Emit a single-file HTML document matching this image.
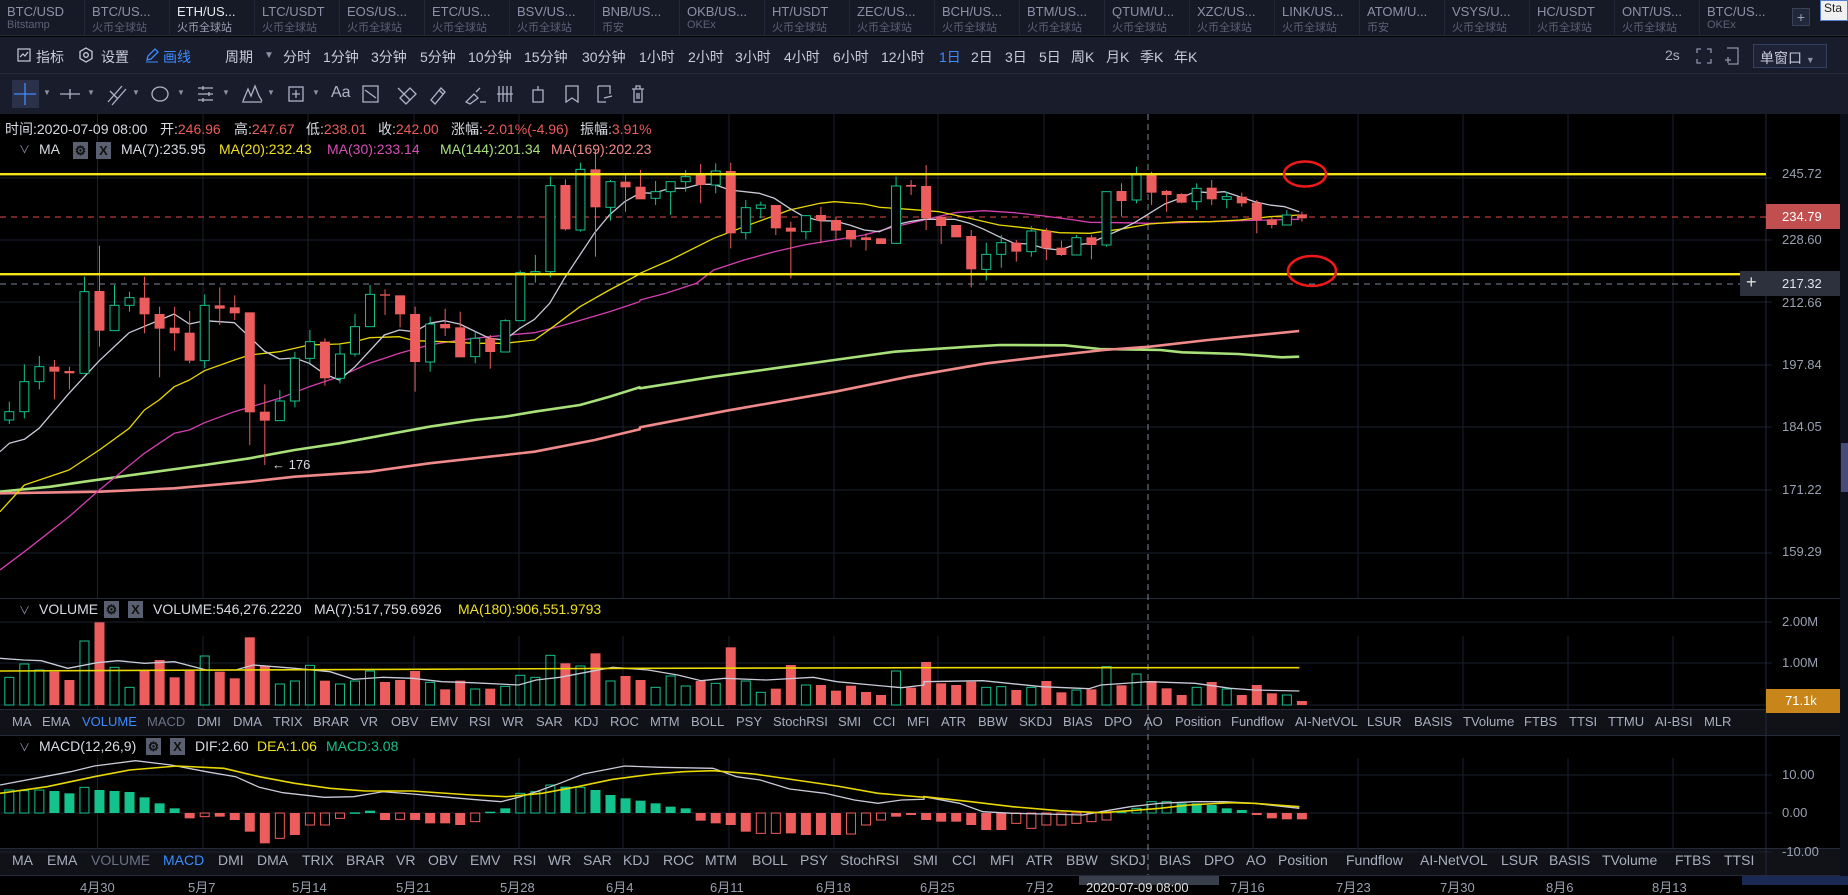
<!DOCTYPE html>
<html><head><meta charset="utf-8">
<style>
*{margin:0;padding:0;box-sizing:border-box}
body{width:1848px;height:885px;overflow:hidden;background:#000;font-family:"Liberation Sans","Noto Sans CJK SC",sans-serif;position:relative;color:#c5c9d6}
.abs{position:absolute;white-space:nowrap}
#tabs{position:absolute;left:0;top:0;width:1848px;height:36px;background:#161a27;border-bottom:1px solid #252a3b}
.tab{position:absolute;top:0;height:36px;width:85px;padding-left:7px;border-right:1px solid #22273a}
.tab .a{font-size:13px;color:#8c92a6;position:absolute;top:4px;left:7px}
.tab .b{font-size:11px;color:#5b6175;position:absolute;top:19px;left:7px}
#row2{position:absolute;left:0;top:37px;width:1848px;height:37px;background:#191c2b;border-bottom:1px solid #262b3c}
#row3{position:absolute;left:0;top:74px;width:1848px;height:40px;background:#191c2b}
.t2{position:absolute;top:10px;font-size:14px;color:#c8ccd8}
.t3{position:absolute;font-size:13px;color:#c8ccd8}
.ind{position:absolute;font-size:13px;color:#a9aebe}
.ind2{position:absolute;font-size:14px;color:#a9aebe}
.box{position:absolute;width:15px;height:17px;background:#5a6072;color:#111;font-size:13px;text-align:center;line-height:17px;font-weight:bold}
.ax{position:absolute;left:1782px;font-size:13px;color:#9aa0b2}
</style></head><body>
<svg id="sv" width="1848" height="885" style="position:absolute;left:0;top:0"></svg>

<div id="tabs">
<div class="tab" style="left:0"><span class="a">BTC/USD</span><span class="b">Bitstamp</span></div>
<div class="tab" style="left:85px"><span class="a">BTC/US...</span><span class="b">火币全球站</span></div>
<div class="tab" style="left:170px"><span class="a" style="color:#e8eaf0">ETH/US...</span><span class="b" style="color:#9aa0b2">火币全球站</span></div>
<div class="tab" style="left:255px"><span class="a">LTC/USDT</span><span class="b">火币全球站</span></div>
<div class="tab" style="left:340px"><span class="a">EOS/US...</span><span class="b">火币全球站</span></div>
<div class="tab" style="left:425px"><span class="a">ETC/US...</span><span class="b">火币全球站</span></div>
<div class="tab" style="left:510px"><span class="a">BSV/US...</span><span class="b">火币全球站</span></div>
<div class="tab" style="left:595px"><span class="a">BNB/US...</span><span class="b">币安</span></div>
<div class="tab" style="left:680px"><span class="a">OKB/US...</span><span class="b">OKEx</span></div>
<div class="tab" style="left:765px"><span class="a">HT/USDT</span><span class="b">火币全球站</span></div>
<div class="tab" style="left:850px"><span class="a">ZEC/US...</span><span class="b">火币全球站</span></div>
<div class="tab" style="left:935px"><span class="a">BCH/US...</span><span class="b">火币全球站</span></div>
<div class="tab" style="left:1020px"><span class="a">BTM/US...</span><span class="b">火币全球站</span></div>
<div class="tab" style="left:1105px"><span class="a">QTUM/U...</span><span class="b">火币全球站</span></div>
<div class="tab" style="left:1190px"><span class="a">XZC/US...</span><span class="b">火币全球站</span></div>
<div class="tab" style="left:1275px"><span class="a">LINK/US...</span><span class="b">火币全球站</span></div>
<div class="tab" style="left:1360px"><span class="a">ATOM/U...</span><span class="b">币安</span></div>
<div class="tab" style="left:1445px"><span class="a">VSYS/U...</span><span class="b">火币全球站</span></div>
<div class="tab" style="left:1530px"><span class="a">HC/USDT</span><span class="b">火币全球站</span></div>
<div class="tab" style="left:1615px"><span class="a">ONT/US...</span><span class="b">火币全球站</span></div>
<div class="tab" style="left:1700px;border-right:none"><span class="a">BTC/US...</span><span class="b">OKEx</span></div>
<div class="abs" style="left:1792px;top:8px;width:18px;height:18px;border:1px solid #3a4058;background:#22283c;color:#9aa0b2;font-size:14px;line-height:16px;text-align:center">+</div>
<div class="abs" style="left:1820px;top:0;width:28px;height:21px;background:#f0f0f0;border:1px solid #5a7fd0;color:#222;font-size:12px;padding-left:3px">Sta</div>
</div>

<div id="row2">
<svg class="abs" style="left:17px;top:11px" width="14" height="14"><rect x="1" y="1" width="12" height="12" fill="none" stroke="#c8ccd8" stroke-width="1.2"/><path d="M3 9 L6 6 L8 8 L11 4" fill="none" stroke="#c8ccd8" stroke-width="1.2"/></svg>
<span class="t2" style="left:36px">指标</span>
<svg class="abs" style="left:79px;top:10px" width="14" height="16"><path d="M7 1 L13 4.5 L13 11.5 L7 15 L1 11.5 L1 4.5 Z" fill="none" stroke="#c8ccd8" stroke-width="1.3"/><circle cx="7" cy="8" r="2.3" fill="none" stroke="#c8ccd8" stroke-width="1.3"/></svg>
<span class="t2" style="left:101px">设置</span>
<svg class="abs" style="left:144px;top:10px" width="16" height="16"><path d="M3 13 L4 9 L11 2 L14 5 L7 12 Z" fill="none" stroke="#3d8bff" stroke-width="1.3"/><path d="M2 15 L14 15" stroke="#3d8bff" stroke-width="1"/></svg>
<span class="t2" style="left:163px;color:#3d8bff">画线</span>
<span class="t2" style="left:225px">周期</span>
<span class="t2" style="left:264px;font-size:10px;top:13px;color:#8c92a6">▼</span>
<span class="t2" style="left:283px">分时</span>
<span class="t2" style="left:323px">1分钟</span>
<span class="t2" style="left:371px">3分钟</span>
<span class="t2" style="left:420px">5分钟</span>
<span class="t2" style="left:468px">10分钟</span>
<span class="t2" style="left:524px">15分钟</span>
<span class="t2" style="left:582px">30分钟</span>
<span class="t2" style="left:639px">1小时</span>
<span class="t2" style="left:688px">2小时</span>
<span class="t2" style="left:735px">3小时</span>
<span class="t2" style="left:784px">4小时</span>
<span class="t2" style="left:833px">6小时</span>
<span class="t2" style="left:881px">12小时</span>
<span class="t2" style="left:939px;color:#3d8bff">1日</span>
<span class="t2" style="left:971px">2日</span>
<span class="t2" style="left:1005px">3日</span>
<span class="t2" style="left:1039px">5日</span>
<span class="t2" style="left:1071px">周K</span>
<span class="t2" style="left:1106px">月K</span>
<span class="t2" style="left:1140px">季K</span>
<span class="t2" style="left:1174px">年K</span>
<span class="t2" style="left:1665px;color:#a9aebe">2s</span>
<svg class="abs" style="left:1696px;top:11px" width="16" height="16"><path d="M1 5V1H5M11 1H15V5M15 11V15H11M5 15H1V11" fill="none" stroke="#8c92a6" stroke-width="1.3"/></svg>
<svg class="abs" style="left:1724px;top:10px" width="16" height="18"><path d="M3 1H14V17H4M1 13H7M4 10V16" fill="none" stroke="#8c92a6" stroke-width="1.3"/></svg>
<div class="abs" style="left:1753px;top:7px;width:74px;height:24px;border:1px solid #34405e;background:#1d2236;font-size:14px;color:#c8ccd8;padding:3px 0 0 6px">单窗口 <span style="font-size:9px;color:#8c92a6">▼</span></div>
</div>

<div id="row3">
<div class="abs" style="left:12px;top:6px;width:27px;height:28px;background:#2b3148"></div>
<svg class="abs" style="left:0;top:0" width="700" height="40" fill="none" stroke="#aeb4c6" stroke-width="1.3">
<path d="M25 9V31M14 20H36" stroke="#3d8bff"/>
<path d="M60 20H80M70 15V25"/>
<path d="M108 28L122 12M112 31L126 15M110 17L118 25" />
<ellipse cx="160" cy="20" rx="8" ry="7"/>
<path d="M198 14H213M198 20H213M198 26H213M203 12V16M209 18V22M203 24V28"/>
<path d="M242 28H262M243 27L248 15L251 22L255 12L259 22L262 27"/>
<rect x="289" y="13" width="14" height="14"/><path d="M296 16V24M292 20H300"/>
<path d="M363 12L378 12L378 28L363 28Z M365 16L376 24" />
<path d="M398 14L410 26M400 24L406 30L416 20L410 14Z"/>
<path d="M431 26L441 14L445 18L435 30Z M439 16L443 20"/>
<path d="M466 28L474 20L478 24L470 30Z M476 18L480 14M480 28H486"/>
<path d="M499 12V28M503 12V28M507 12V28M511 12V28M497 20H513"/>
<path d="M533 16H543V28H533Z M538 12V16"/>
<path d="M566 12H578V28L572 24L566 28Z"/>
<path d="M598 12H610V20M598 12V28H606M604 24L612 22"/>
<path d="M632 15H644M636 15V12H640V15M634 15V28H642V15M637 19V25M639 19V25"/>
</svg>
<span class="t3" style="left:43px;top:14px;font-size:8px;color:#8c92a6">▼</span>
<span class="t3" style="left:87px;top:14px;font-size:8px;color:#8c92a6">▼</span>
<span class="t3" style="left:132px;top:14px;font-size:8px;color:#8c92a6">▼</span>
<span class="t3" style="left:177px;top:14px;font-size:8px;color:#8c92a6">▼</span>
<span class="t3" style="left:222px;top:14px;font-size:8px;color:#8c92a6">▼</span>
<span class="t3" style="left:267px;top:14px;font-size:8px;color:#8c92a6">▼</span>
<span class="t3" style="left:312px;top:14px;font-size:8px;color:#8c92a6">▼</span>
<span class="t3" style="left:331px;top:10px;font-size:16px;color:#aeb4c6">Aa</span>
</div>

<div class="abs" style="left:5px;top:119px;font-size:14px;color:#d8dbe4">时间:2020-07-09 08:00</div>
<div class="abs" style="left:160px;top:119px;font-size:14px;color:#d8dbe4">开:<span style="color:#ec5b5b">246.96</span></div>
<div class="abs" style="left:234px;top:119px;font-size:14px;color:#d8dbe4">高:<span style="color:#ec5b5b">247.67</span></div>
<div class="abs" style="left:306px;top:119px;font-size:14px;color:#d8dbe4">低:<span style="color:#ec5b5b">238.01</span></div>
<div class="abs" style="left:378px;top:119px;font-size:14px;color:#d8dbe4">收:<span style="color:#ec5b5b">242.00</span></div>
<div class="abs" style="left:451px;top:119px;font-size:14px;color:#d8dbe4">涨幅:<span style="color:#ec5b5b">-2.01%(-4.96)</span></div>
<div class="abs" style="left:580px;top:119px;font-size:14px;color:#d8dbe4">振幅:<span style="color:#ec5b5b">3.91%</span></div>

<div class="abs" style="left:19px;top:141px;font-size:11px;color:#8c92a6">∨</div>
<div class="abs" style="left:39px;top:141px;font-size:14px;color:#d8dbe4">MA</div>
<div class="box" style="left:73px;top:142px">⚙</div>
<div class="box" style="left:96px;top:142px">X</div>
<div class="abs" style="left:121px;top:141px;font-size:14px;color:#d8dbe4">MA(7):235.95</div>
<div class="abs" style="left:219px;top:141px;font-size:14px;color:#f0e020">MA(20):232.43</div>
<div class="abs" style="left:327px;top:141px;font-size:14px;color:#d64fb8">MA(30):233.14</div>
<div class="abs" style="left:440px;top:141px;font-size:14px;color:#a8e07a">MA(144):201.34</div>
<div class="abs" style="left:551px;top:141px;font-size:14px;color:#f08a8a">MA(169):202.23</div>

<div class="abs" style="left:19px;top:602px;font-size:11px;color:#8c92a6">∨</div>
<div class="abs" style="left:39px;top:601px;font-size:14px;color:#d8dbe4">VOLUME</div>
<div class="box" style="left:104px;top:601px">⚙</div>
<div class="box" style="left:128px;top:601px">X</div>
<div class="abs" style="left:153px;top:601px;font-size:14px;color:#d8dbe4">VOLUME:546,276.2220</div>
<div class="abs" style="left:314px;top:601px;font-size:14px;color:#d8dbe4">MA(7):517,759.6926</div>
<div class="abs" style="left:458px;top:601px;font-size:14px;color:#f0e020">MA(180):906,551.9793</div>

<div class="abs" style="left:19px;top:739px;font-size:11px;color:#8c92a6">∨</div>
<div class="abs" style="left:39px;top:738px;font-size:14px;color:#d8dbe4">MACD(12,26,9)</div>
<div class="box" style="left:146px;top:738px">⚙</div>
<div class="box" style="left:170px;top:738px">X</div>
<div class="abs" style="left:195px;top:738px;font-size:14px;color:#d8dbe4">DIF:2.60</div>
<div class="abs" style="left:257px;top:738px;font-size:14px;color:#f0e020">DEA:1.06</div>
<div class="abs" style="left:326px;top:738px;font-size:14px;color:#14c28e">MACD:3.08</div>

<div class="abs" style="left:272px;top:457px;font-size:13px;color:#d8dbe4">← 176</div>

<div class="ax" style="top:166px">245.72</div>
<div class="abs" style="left:1766px;top:204px;width:74px;height:25px;background:#c24f4f"></div>
<div class="ax" style="top:209px;color:#fff">234.79</div>
<div class="ax" style="top:232px">228.60</div>
<div class="abs" style="left:1740px;top:271px;width:100px;height:25px;background:#2c313d"></div>
<div class="abs" style="left:1746px;top:272px;font-size:18px;color:#e0e0e0">+</div>
<div class="ax" style="top:276px;color:#e0e4ee">217.32</div>
<div class="ax" style="top:295px">212.66</div>
<div class="ax" style="top:357px">197.84</div>
<div class="ax" style="top:419px">184.05</div>
<div class="ax" style="top:482px">171.22</div>
<div class="ax" style="top:544px">159.29</div>
<div class="ax" style="top:614px">2.00M</div>
<div class="ax" style="top:655px">1.00M</div>
<div class="abs" style="left:1766px;top:689px;width:74px;height:24px;background:#c8851a"></div>
<div class="ax" style="top:693px;left:1785px;color:#fff">71.1k</div>
<div class="ax" style="top:767px">10.00</div>
<div class="ax" style="top:805px">0.00</div>
<div class="ax" style="top:844px">-10.00</div>

<div id="ind1"></div><div id="ind2"></div>
<div class="abs" style="left:20px;top:881px;font-size:13px;color:#9aa0b2;line-height:13px">
<span class="abs" style="left:60px">4月30</span><span class="abs" style="left:168px">5月7</span><span class="abs" style="left:272px">5月14</span><span class="abs" style="left:376px">5月21</span><span class="abs" style="left:480px">5月28</span><span class="abs" style="left:586px">6月4</span><span class="abs" style="left:690px">6月11</span><span class="abs" style="left:796px">6月18</span><span class="abs" style="left:900px">6月25</span><span class="abs" style="left:1006px">7月2</span><span class="abs" style="left:1210px">7月16</span><span class="abs" style="left:1316px">7月23</span><span class="abs" style="left:1420px">7月30</span><span class="abs" style="left:1526px">8月6</span><span class="abs" style="left:1632px">8月13</span>
</div>
<div class="abs" style="left:1079px;top:876px;width:140px;height:9px;background:#3a3f4c"></div>
<div class="abs" style="left:1086px;top:881px;font-size:13px;color:#e0e0e0;line-height:13px">2020-07-09 08:00</div>
<div class="abs" style="left:1742px;top:876px;width:106px;height:9px;background:#1b2a55"></div>

<script>
const S=document.getElementById('sv');let h='';
const G='#14c28e',R='#ee5d5d';
h+='<rect x="0" y="598" width="1848" height="1" fill="#252a3b"/>';
h+='<rect x="0" y="710" width="1840" height="25" fill="#101218"/>';
h+='<rect x="0" y="709" width="1840" height="1" fill="#252a3b"/><rect x="0" y="735" width="1840" height="1" fill="#252a3b"/>';
h+='<rect x="0" y="848" width="1840" height="27" fill="#101218"/>';
h+='<rect x="0" y="848" width="1840" height="1" fill="#252a3b"/><rect x="0" y="875" width="1848" height="1" fill="#252a3b"/>';
h+='<rect x="1840" y="114" width="8" height="771" fill="#0d0f18"/><rect x="1841" y="443" width="7" height="49" fill="#454c78"/>';
const vx=[97.5,203,308,414,519,623,729,834,938,1044,1253,1358,1463,1568,1673];
vx.forEach(x=>{h+=`<line x1="${x}" y1="114" x2="${x}" y2="598" stroke="#1c2030"/><line x1="${x}" y1="636" x2="${x}" y2="709" stroke="#1c2030"/><line x1="${x}" y1="758" x2="${x}" y2="848" stroke="#1c2030"/>`});
[178,240,302,365,427,490,553,622,663,705,775,813,852].forEach(y=>{h+=`<line x1="0" y1="${y}" x2="1772" y2="${y}" stroke="#1c2030"/>`});
h+='<line x1="1766" y1="114" x2="1766" y2="875" stroke="#252a3b"/>';
h+='<line x1="1148" y1="114" x2="1148" y2="875" stroke="#7c8496" stroke-dasharray="6,4"/>';
h+='<line x1="0" y1="284" x2="1740" y2="284" stroke="#7c8496" stroke-dasharray="6,5"/>';
h+='<line x1="0" y1="217" x2="1766" y2="217" stroke="#e04848" stroke-dasharray="6,5"/>';
const Y=v=>150+v/3;
const C=[[1,785,810,755,822],[1,695,785,643,805],[1,650,695,618,718],[0,650,665,630,748],[0,663,670,650,718],[1,425,670,380,670],[0,423,542,287,590],[1,466,542,405,542],[1,443,466,425,485],[0,443,493,380,550],[0,492,536,470,682],[0,533,550,470,602],[0,548,632,483,640],[1,466,632,433,655],[0,466,476,412,525],[0,472,490,436,510],[0,487,787,487,885],[0,785,812,703,945],[1,753,812,720,812],[1,625,753,605,772],[1,575,625,540,640],[0,575,685,565,707],[1,612,685,582,700],[1,530,612,492,620],[1,433,530,405,530],[0,433,437,418,495],[0,436,493,436,532],[0,492,636,470,725],[1,522,636,500,665],[0,522,535,476,558],[0,532,622,485,622],[1,565,620,545,640],[0,565,606,555,656],[1,512,606,508,606],[1,368,512,362,512],[1,365,370,315,398],[1,107,365,80,382],[0,105,238,88,242],[1,58,240,38,245],[0,58,172,0,320],[1,95,172,90,212],[0,95,112,75,185],[0,110,148,60,148],
[1,125,145,93,165],[1,95,125,95,195],[1,80,95,60,125],[0,75,105,42,160],[1,63,105,40,130],[0,63,250,38,295],[1,173,248,150,268],[1,165,175,155,205],[0,165,235,165,255],[0,233,245,215,385],[1,197,245,195,268],[0,195,212,170,280],[0,210,242,200,272],[0,240,268,240,292],[0,262,270,250,302],[0,265,282,265,282],[1,108,280,80,280],[0,105,110,90,135],[0,108,205,45,240],[0,200,228,200,282],[0,225,262,225,262],[0,258,358,240,412],[1,313,358,278,392],[1,278,313,255,353],[0,278,305,270,335],[1,243,305,228,320],[0,243,295,235,330],[0,293,315,272,318],[1,263,315,255,315],[0,262,285,255,328],[1,125,285,125,290],[0,123,153,100,200],[1,75,150,50,160],[0,75,128,65,165],[0,123,135,120,185],[0,132,158,130,160],[1,115,155,100,180],[0,113,148,90,165],[1,140,148,125,175],[0,140,160,128,170],[0,158,210,150,250],[0,208,225,200,235],[1,195,225,180,225],[0,193,205,185,215]];
const X=i=>9.3+15.03*i;
function pl(a,b,col,w){let p=[];a.forEach(q=>{const x=q[0]/2.376;if(x<640)p.push([x,Y(q[1])])});b.forEach(q=>{p.push([640+q[0]/2.306,Y(q[1])])});h+=`<polyline points="${p.map(q=>q[0].toFixed(1)+','+q[1].toFixed(1)).join(' ')}" fill="none" stroke="${col}" stroke-width="${w}" stroke-linejoin="round"/>`;}
pl([[0,1025],[120,1010],[200,995],[343,970],[486,945],[593,925],[700,900],[806,880],[913,855],[1020,830],[1127,810],[1199,800],[1270,785],[1378,765],[1448,740],[1520,712]],[[0,715],[170,680],[310,655],[448,630],[587,605],[760,590],[830,585],[980,586],[1060,597],[1200,600],[1250,607],[1380,612],[1480,622],[1520,620]],'#a8e07a',2.6);
pl([[0,1030],[236,1025],[414,1015],[593,995],[700,980],[878,965],[1020,940],[1199,915],[1270,905],[1413,870],[1520,838]],[[0,832],[200,782],[450,725],[620,680],[800,640],[930,620],[1070,600],[1175,590],[1310,570],[1520,543]],'#f08a8a',2.6);
pl([[0,1260],[58,1205],[164,1100],[236,1020],[343,910],[414,850],[450,840],[486,818],[557,785],[664,745],[735,710],[806,680],[878,640],[949,610],[1020,585],[1092,570],[1163,560],[1270,548],[1341,525],[1448,485],[1520,455]],[[0,450],[60,430],[130,400],[170,360],[240,330],[310,305],[378,285],[448,270],[517,255],[587,230],[655,210],[725,188],[793,182],[863,188],[932,198],[1002,210],[1037,217],[1106,218],[1175,220],[1245,218],[1314,215],[1383,212],[1452,210],[1520,208]],'#d63fb0',1.3);
pl([[0,1085],[58,1005],[164,960],[236,900],[307,835],[343,780],[378,750],[414,710],[450,690],[486,662],[557,630],[593,615],[664,605],[735,585],[806,582],[842,575],[878,563],[949,560],[985,572],[1056,575],[1127,580],[1199,580],[1270,570],[1306,538],[1378,470],[1448,420],[1520,372]],[[0,370],[70,330],[170,265],[240,230],[345,180],[415,160],[448,155],[517,162],[552,172],[620,178],[690,185],[760,205],[828,225],[898,235],[967,248],[1037,250],[1106,238],[1175,222],[1245,215],[1314,215],[1383,210],[1452,200],[1520,195]],'#e8d800',1.3);
pl([[0,905],[22,880],[58,868],[93,835],[164,730],[236,632],[307,548],[414,492],[450,522],[486,512],[557,518],[628,603],[664,627],[700,624],[735,640],[771,672],[806,690],[842,652],[913,555],[949,540],[985,545],[1020,520],[1056,512],[1092,522],[1163,565],[1199,570],[1235,535],[1270,508],[1306,460],[1341,385],[1413,248],[1448,195],[1484,155],[1520,130]],[[0,128],[33,130],[68,115],[103,115],[138,103],[170,103],[207,120],[275,130],[310,145],[345,175],[378,200],[415,212],[448,213],[483,225],[517,240],[552,245],[587,225],[620,215],[655,208],[690,208],[725,208],[760,220],[793,238],[828,260],[863,280],[898,282],[932,295],[967,300],[1002,285],[1037,280],[1071,260],[1106,240],[1140,218],[1175,190],[1210,162],[1245,145],[1280,125],[1314,128],[1348,125],[1383,140],[1418,155],[1452,165],[1487,170],[1520,185]],'#c8cad8',1.3);
C.forEach((c,i)=>{const x=X(i),col=c[0]?G:R;const t=Y(c[1]),b=Math.max(Y(c[2]),t+1),hi=Y(c[3]),lo=Y(c[4]);
 h+=`<line x1="${x}" y1="${hi}" x2="${x}" y2="${t}" stroke="${col}"/><line x1="${x}" y1="${b}" x2="${x}" y2="${lo}" stroke="${col}"/>`;
 if(c[0])h+=`<rect x="${x-4.5}" y="${t}" width="9" height="${b-t}" fill="#000" stroke="${col}"/>`;else h+=`<rect x="${x-5}" y="${t}" width="10" height="${b-t}" fill="${col}"/>`;});
h+='<rect x="0" y="173" width="1766" height="2.4" fill="#f5e31a"/><rect x="0" y="273" width="1740" height="2.4" fill="#f5e31a"/>';
h+='<ellipse cx="1305" cy="174" rx="21" ry="12.5" fill="none" stroke="#f01818" stroke-width="2.5"/><ellipse cx="1312" cy="271" rx="24" ry="15" fill="none" stroke="#f01818" stroke-width="2.5"/>';
const V=[[1,262],[1,222],[1,240],[0,245],[0,270],[1,153],[0,97],[1,232],[1,292],[0,242],[0,210],[0,262],[0,242],[1,198],[0,245],[0,265],[0,142],[0,228],[1,282],[1,273],[1,226],[0,272],[1,282],[1,273],[1,243],[0,276],[0,270],[0,243],[1,277],[0,298],[0,272],[1,297],[0,296],[1,289],[1,256],[1,262],[1,196],[0,220],[1,228],[0,190],[1,273],[0,258],[0,270],[1,292],[1,258],[1,288],[0,273],[1,280],[0,172],[1,273],[1,307],[0,296],[0,225],[1,285],[0,285],[0,302],[0,287],[0,306],[0,315],[1,243],[0,293],[0,216],[0,280],[0,285],[0,275],[1,292],[1,290],[0,300],[1,292],[0,273],[0,307],[1,300],[0,298],[1,230],[0,286],[1,252],[0,273],[0,295],[0,315],[1,292],[0,276],[1,297],[0,315],[0,285],[0,310],[1,315],[0,333]];
const VY=v=>590+v/3;
V.forEach((v,i)=>{const x=X(i),t=VY(v[1]);if(v[0])h+=`<rect x="${x-4.5}" y="${t}" width="9" height="${705-t}" fill="none" stroke="${G}"/>`;else h+=`<rect x="${x-5}" y="${t}" width="10" height="${705-t}" fill="${R}"/>`;});
function pv(a,b,col,w){let p=[];a.forEach(q=>{const x=q[0]/1.697;if(x<924)p.push([x,VY(q[1])])});b.forEach(q=>p.push([924+q[0]/1.697,VY(q[1])]));h+=`<polyline points="${p.map(q=>q[0].toFixed(1)+','+q[1].toFixed(1)).join(' ')}" fill="none" stroke="${col}" stroke-width="${w}"/>`;}
pv([[0,205],[40,210],[70,212],[115,235],[165,218],[200,212],[245,220],[296,215],[350,240],[400,240],[430,225],[500,235],[560,245],[600,268],[650,262],[700,265],[750,275],[800,278],[880,285],[910,270],[950,262],[1000,245],[1040,232],[1100,240],[1150,255],[1190,272],[1230,265],[1300,270],[1380,262],[1420,275],[1480,285],[1530,293],[1568,285]],[[0,275],[100,272],[200,290],[280,296],[300,285],[380,275],[460,280],[520,295],[560,300],[637,303]],'#c8cad8',1.3);
pv([[0,243],[400,240],[1100,235],[1568,233]],[[0,233],[637,233]],'#e8d800',1.6);
const M=[[600,1],[602,1],[600,1],[603,0],[610,0],[592,1],[600,0],[603,0],[606,0],[622,0],[640,0],[655,0],[685,0],[680,1],[680,0],[690,0],[725,0],[760,0],[745,1],[735,0],[705,1],[705,1],[685,1],[667,0],[662,0],[690,0],[688,1],[690,0],[700,0],[700,0],[705,0],[695,1],[665,0],[655,0],[610,1],[605,1],[585,1],[590,0],[592,1],[600,0],[615,0],[625,0],[632,0],[640,0],[650,0],[655,0],[692,0],[700,0],[705,0],[725,0],[730,1],[730,1],[730,0],[735,0],[735,0],[735,0],[732,1],[705,1],[690,1],[680,0],[675,0],[690,0],[695,0],[695,0],[705,0],[720,0],[720,0],[700,1],[715,1],[705,1],[705,1],[700,1],[695,1],[690,1],[665,0],[655,1],[635,1],[635,1],[640,0],[640,0],[645,0],[655,0],[660,0],[675,0],[685,0],[688,0],[688,0]];
M.forEach((m,i)=>{const x=X(i),y=VY(m[0]),z=813;const pos=y<z,col=pos?G:R;const t=Math.min(y,z),hh=Math.max(Math.abs(y-z),1.5);
 if(m[1])h+=`<rect x="${x-4.5}" y="${t}" width="9" height="${hh}" fill="none" stroke="${col}"/>`;else h+=`<rect x="${x-5}" y="${t}" width="10" height="${hh}" fill="${col}"/>`;});
pv([[0,585],[60,565],[120,545],[160,528],[230,512],[290,525],[350,545],[400,560],[440,592],[480,608],[550,622],[600,620],[650,605],[700,612],[750,620],[800,628],[850,635],[880,622],[910,605],[950,580],[990,552],[1060,528],[1120,532],[1210,535],[1250,560],[1290,570],[1340,597],[1400,610],[1450,630],[1490,640],[1530,630],[1568,628]],[[0,620],[60,640],[100,665],[150,670],[200,672],[270,675],[300,665],[350,650],[400,640],[460,635],[510,635],[560,640],[637,655]],'#c8cad8',1.3);
pv([[0,610],[80,590],[160,560],[220,540],[300,528],[380,535],[440,560],[500,580],[560,595],[620,603],[700,603],[800,615],[860,620],[920,610],[980,590],[1040,568],[1110,552],[1160,545],[1210,542],[1280,552],[1350,570],[1420,588],[1490,610],[1568,622]],[[0,620],[80,635],[150,650],[230,662],[300,668],[350,662],[400,655],[450,645],[520,638],[560,640],[637,650]],'#e8d800',1.6);
S.innerHTML=h;
const r1=[['MA',12],['EMA',42],['VOLUME',82,'#3d8bff'],['MACD',147,'#6c7286'],['DMI',197],['DMA',233],['TRIX',273],['BRAR',313],['VR',360],['OBV',391],['EMV',430],['RSI',469],['WR',502],['SAR',536],['KDJ',574],['ROC',610],['MTM',650],['BOLL',691],['PSY',736],['StochRSI',773],['SMI',838],['CCI',873],['MFI',907],['ATR',941],['BBW',978],['SKDJ',1019],['BIAS',1063],['DPO',1104],['AO',1144],['Position',1175],['Fundflow',1231],['AI-NetVOL',1295],['LSUR',1367],['BASIS',1414],['TVolume',1463],['FTBS',1524],['TTSI',1569],['TTMU',1608],['AI-BSI',1655],['MLR',1704]];
const r2=[['MA',12],['EMA',47],['VOLUME',91,'#6c7286'],['MACD',163,'#3d8bff'],['DMI',218],['DMA',257],['TRIX',302],['BRAR',346],['VR',396],['OBV',428],['EMV',470],['RSI',513],['WR',548],['SAR',583],['KDJ',623],['ROC',663],['MTM',705],['BOLL',752],['PSY',800],['StochRSI',840],['SMI',913],['CCI',952],['MFI',990],['ATR',1026],['BBW',1066],['SKDJ',1110],['BIAS',1159],['DPO',1204],['AO',1246],['Position',1278],['Fundflow',1346],['AI-NetVOL',1420],['LSUR',1501],['BASIS',1549],['TVolume',1602],['FTBS',1675],['TTSI',1724]];
document.getElementById('ind1').innerHTML=r1.map(a=>`<span class="ind" style="left:${a[1]}px;top:714px;${a[2]?'color:'+a[2]:''}">${a[0]}</span>`).join('');
document.getElementById('ind2').innerHTML=r2.map(a=>`<span class="ind2" style="left:${a[1]}px;top:852px;${a[2]?'color:'+a[2]:''}">${a[0]}</span>`).join('');
</script>
</body></html>
